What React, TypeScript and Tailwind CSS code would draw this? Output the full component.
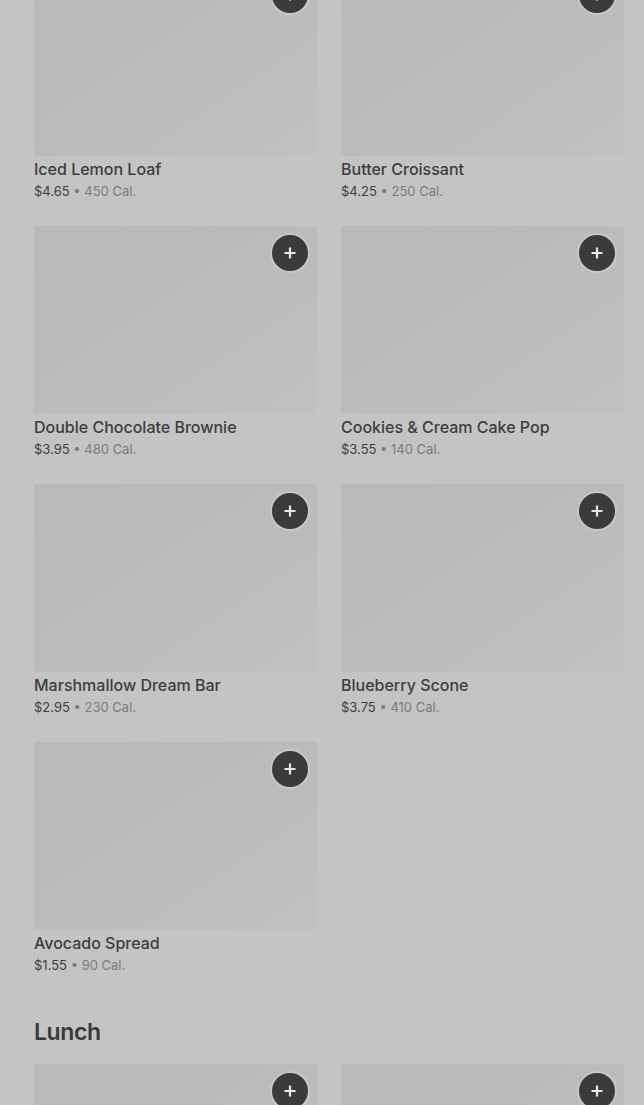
import React from 'react';

type Item = { name: string; price: string; cal: string };

const bakery: Item[] = [
  { name: 'Iced Lemon Loaf', price: '$4.65', cal: '450 Cal.' },
  { name: 'Butter Croissant', price: '$4.25', cal: '250 Cal.' },
  { name: 'Double Chocolate Brownie', price: '$3.95', cal: '480 Cal.' },
  { name: 'Cookies & Cream Cake Pop', price: '$3.55', cal: '140 Cal.' },
  { name: 'Marshmallow Dream Bar', price: '$2.95', cal: '230 Cal.' },
  { name: 'Blueberry Scone', price: '$3.75', cal: '410 Cal.' },
  { name: 'Avocado Spread', price: '$1.55', cal: '90 Cal.' },
];

const lunch: Item[] = [
  { name: 'Turkey Pesto Panini', price: '$7.45', cal: '520 Cal.' },
  { name: 'Chicken Caprese', price: '$7.95', cal: '560 Cal.' },
];

function Card({ item }: { item: Item }) {
  return (
    <div className="flex flex-col">
      <div className="relative h-[188px] bg-gradient-to-br from-[#b9b9b9] via-[#bbbbbb] to-[#c1c1c1]">
        <button className="absolute top-[9px] right-[9px] w-9 h-9 rounded-full bg-[#3b3b3b] flex items-center justify-center shadow-[0_0_0_2px_rgba(255,255,255,0.18)]">
          <svg width="14" height="14" viewBox="0 0 14 14" fill="none">
            <path d="M7 1.5v11M1.5 7h11" stroke="#e6e6e6" strokeWidth="2.2" />
          </svg>
        </button>
      </div>
      <p className="mt-[1px] text-[16px] leading-6 font-medium text-[#3d3d3d]">{item.name}</p>
      <p className="text-[13px] leading-[21px] text-[#3d3d3d]">
        {item.price}
        <span className="text-[#7b7b7b]"> • {item.cal}</span>
      </p>
    </div>
  );
}

export default function App() {
  return (
    <div className="min-h-screen bg-[#c4c4c4] overflow-hidden" style={{ fontFamily: 'Inter, "Liberation Sans", sans-serif' }}>
      <div className="-mt-[32px] pl-[34px] pr-[20px]">
        <div className="grid grid-cols-2 gap-x-6 gap-y-6">
          {bakery.map((it) => (
            <Card key={it.name} item={it} />
          ))}
        </div>
        <h2 className="mt-10 mb-4 text-[23px] leading-8 font-semibold tracking-[-0.4px] text-[#3a3a3a]">Lunch</h2>
        <div className="grid grid-cols-2 gap-x-6 gap-y-6">
          {lunch.map((it) => (
            <Card key={it.name} item={it} />
          ))}
        </div>
      </div>
    </div>
  );
}
